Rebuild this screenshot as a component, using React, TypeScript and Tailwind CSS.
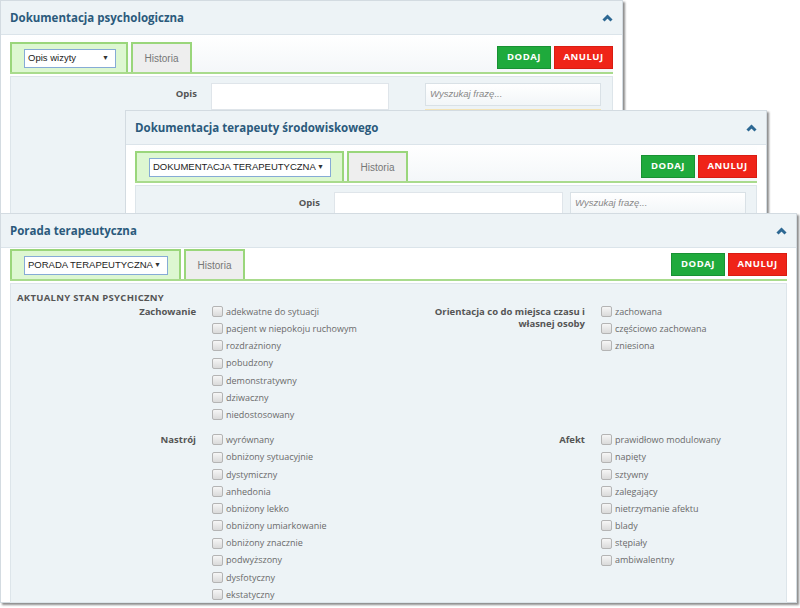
import type { ReactNode } from "react";

const zachowanie = [
  "adekwatne do sytuacji",
  "pacjent w niepokoju ruchowym",
  "rozdrażniony",
  "pobudzony",
  "demonstratywny",
  "dziwaczny",
  "niedostosowany",
];
const orientacja = ["zachowana", "częściowo zachowana", "zniesiona"];
const nastroj = [
  "wyrównany",
  "obniżony sytuacyjnie",
  "dystymiczny",
  "anhedonia",
  "obniżony lekko",
  "obniżony umiarkowanie",
  "obniżony znacznie",
  "podwyższony",
  "dysfotyczny",
  "ekstatyczny",
];
const afekt = [
  "prawidłowo modulowany",
  "napięty",
  "sztywny",
  "zalegający",
  "nietrzymanie afektu",
  "blady",
  "stępiały",
  "ambiwalentny",
];

function ChevronUp() {
  return (
    <svg width="11" height="8" viewBox="0 0 11 8">
      <path d="M1.5 6.5 L5.5 2.5 L9.5 6.5" fill="none" stroke="#2d6893" strokeWidth="3" />
    </svg>
  );
}

function Buttons() {
  return (
    <div className="flex gap-[3px] mb-[3px] font-['Open_Sans',sans-serif] text-[9.5px] font-bold text-white tracking-[0.5px]">
      <div className="w-[54px] h-[23px] flex items-center justify-center bg-[#1faa3c] border border-[#189133]">
        DODAJ
      </div>
      <div className="w-[59px] h-[23px] flex items-center justify-center bg-[#ef2418] border border-[#d81c12]">
        ANULUJ
      </div>
    </div>
  );
}

interface PanelProps {
  className: string;
  title: string;
  selectLabel: string;
  tabClass: string;
  selectClass: string;
  rowClass: string;
  children: ReactNode;
}

function Panel({ className, title, selectLabel, tabClass, selectClass, rowClass, children }: PanelProps) {
  return (
    <div
      className={`absolute bg-white border border-[#d3dbe1] shadow-[2px_2px_2px_rgba(0,0,0,0.45)] ${className}`}
    >
      <div className="h-[34px] px-[9px] flex items-center justify-between bg-[#edf3f6] border-b border-[#dbe4ea]">
        <h2 className="font-['Open_Sans',sans-serif] text-[11.5px] font-bold text-[#2b5a7c]">{title}</h2>
        <ChevronUp />
      </div>
      <div className={`mx-[9px] flex items-end justify-between border-b-2 border-[#a9db8d] ${rowClass}`}>
        <div className="flex items-end font-['Liberation_Sans',Arial,sans-serif]">
          <div className={`h-[30px] pl-[12px] flex items-center bg-[#ddf7d1] border-2 border-b-0 border-[#9ad67b] ${tabClass}`}>
            <div
              className={`h-[19px] pl-[3px] pr-[6px] flex items-center justify-between bg-white border border-[#86abd6] text-[9.5px] text-[#222] ${selectClass}`}
            >
              <span>{selectLabel}</span>
              <span className="text-[7px] text-[#333]">▼</span>
            </div>
          </div>
          <div className="ml-[3px] w-[61px] h-[30px] flex items-center justify-center bg-[#eeeeee] border-2 border-b-0 border-[#9ad67b] text-[10px] text-[#777]">
            Historia
          </div>
        </div>
        <Buttons />
      </div>
      {children}
    </div>
  );
}

function OpisRow({ labelClass, inputClass }: { labelClass: string; inputClass: string }) {
  return (
    <div className="mx-[9px] mt-[2px] h-[200px] bg-[#edf3f6] border border-[#dde5ea] pt-[6px] flex items-start">
      <div
        className={`pt-[4px] text-right font-['Open_Sans',sans-serif] text-[9.5px] font-bold text-[#555] ${labelClass}`}
      >
        Opis
      </div>
      <div className={`ml-[14px] h-[27px] bg-white border border-[#dfe5ea] ${inputClass}`} />
      <div className="flex flex-col">
        <div className="w-[176px] h-[23px] pl-[4px] flex items-center bg-gradient-to-b from-white to-[#f2f6f8] border border-[#d9e1e6] font-['Liberation_Sans',Arial,sans-serif] text-[9.5px] italic text-[#888]">
          Wyszukaj frazę...
        </div>
        <div className="mt-[3px] h-[2px] bg-[#f3e3b4]" />
      </div>
    </div>
  );
}

function Group({ label, items, className = "" }: { label: ReactNode; items: string[]; className?: string }) {
  return (
    <div className={`flex items-start ${className}`}>
      <div className="w-[179px] pt-[2.5px] text-right text-[9.5px] font-bold leading-[12px] text-[#555]">{label}</div>
      <div className="ml-[16px] flex flex-col">
        {items.map((it) => (
          <div key={it} className="h-[17.2px] flex items-center gap-[3px]">
            <span className="w-[11px] h-[11px] rounded-[2px] border border-[#b4b4b4] bg-gradient-to-b from-[#f6f6f6] to-[#dadada]" />
            <span className="text-[9px] text-[#6a6a6a]">{it}</span>
          </div>
        ))}
      </div>
    </div>
  );
}

export default function App() {
  return (
    <div className="relative w-[800px] h-[608px] bg-white overflow-hidden font-['Open_Sans',sans-serif]">
      <Panel
        className="left-0 top-0 w-[623px] h-[240px]"
        title="Dokumentacja psychologiczna"
        selectLabel="Opis wizyty"
        tabClass="w-[118px]"
        selectClass="w-[92px]"
        rowClass="pt-[7px] bg-gradient-to-b from-white to-[#f4f7f9]"
      >
        <OpisRow labelClass="w-[186px]" inputClass="w-[178px] mr-[36px]" />
      </Panel>

      <Panel
        className="left-[125px] top-[110px] w-[642px] h-[200px]"
        title="Dokumentacja terapeuty środowiskowego"
        selectLabel="DOKUMENTACJA TERAPEUTYCZNA"
        tabClass="w-[209px]"
        selectClass="w-[182px]"
        rowClass="pt-[6px] bg-gradient-to-b from-white to-[#f4f7f9]"
      >
        <OpisRow labelClass="w-[184px]" inputClass="w-[229px] mr-[7px]" />
      </Panel>

      <Panel
        className="left-0 top-[213px] w-[797px] h-[390px]"
        title="Porada terapeutyczna"
        selectLabel="PORADA TERAPEUTYCZNA"
        tabClass="w-[171px]"
        selectClass="w-[144px]"
        rowClass="pt-[1px]"
      >
        <div className="mx-[9px] mt-[2px] h-[320px] bg-[#edf3f6] border border-[#dde5ea] px-[6px] pt-[8px]">
          <div className="text-[9.5px] font-bold leading-[11px] tracking-[0.3px] text-[#555]">
            AKTUALNY STAN PSYCHICZNY
          </div>
          <div className="grid grid-cols-[389px_1fr]">
            <Group label="Zachowanie" items={zachowanie} />
            <Group
              label={
                <>
                  Orientacja co do miejsca czasu i
                  <br />
                  własnej osoby
                </>
              }
              items={orientacja}
            />
            <Group label="Nastrój" items={nastroj} className="mt-[8px]" />
            <Group label="Afekt" items={afekt} className="mt-[8px]" />
          </div>
        </div>
      </Panel>
    </div>
  );
}
